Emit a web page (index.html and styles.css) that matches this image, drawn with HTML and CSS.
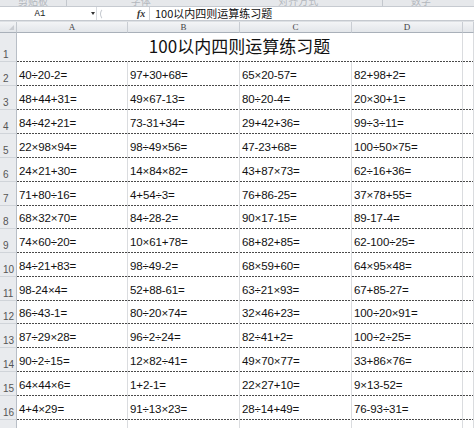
FILE: index.html
```html
<!DOCTYPE html>
<html lang="zh-CN">
<head>
<meta charset="utf-8">
<title>100以内四则运算练习题</title>
<link rel="stylesheet" href="styles.css">
</head>
<body>
<div class="app">
  <div class="ribbon">
    <div class="rgroup g1"><span class="rlabel">剪贴板</span></div>
    <div class="rgroup g2"><span class="rlabel">字体</span><span class="rlabel">对齐方式</span></div>
    <div class="rgroup g3"><span class="rlabel">数字</span></div>
  </div>
  <div class="fbar">
    <div class="namebox"><span class="nb-text">A1</span><span class="nb-arrow"></span></div>
    <div class="fxzone"><span class="arc"></span><span class="fx">fx</span></div>
    <div class="finput">100以内四则运算练习题</div>
  </div>
  <div class="gap"></div>
  <div class="sheet">
    <div class="corner"><span class="tri"></span></div><div class="ch">A</div><div class="ch">B</div><div class="ch">C</div><div class="ch">D</div><div class="ch"></div>

    <div class="rh">1</div><div class="title">100以内四则运算练习题</div><div class="c"></div>

    <div class="rh">2</div><div class="c">40÷20-2=</div><div class="c">97+30+68=</div><div class="c">65×20-57=</div><div class="c">82+98+2=</div><div class="c"></div>
    <div class="rh">3</div><div class="c">48+44+31=</div><div class="c">49×67-13=</div><div class="c">80÷20-4=</div><div class="c">20×30+1=</div><div class="c"></div>
    <div class="rh">4</div><div class="c">84÷42+21=</div><div class="c">73-31+34=</div><div class="c">29+42+36=</div><div class="c">99÷3÷11=</div><div class="c"></div>
    <div class="rh">5</div><div class="c">22×98×94=</div><div class="c">98÷49×56=</div><div class="c">47-23+68=</div><div class="c">100÷50×75=</div><div class="c"></div>
    <div class="rh">6</div><div class="c">24×21+30=</div><div class="c">14×84×82=</div><div class="c">43+87×73=</div><div class="c">62÷16+36=</div><div class="c"></div>
    <div class="rh">7</div><div class="c">71+80÷16=</div><div class="c">4+54÷3=</div><div class="c">76+86-25=</div><div class="c">37×78+55=</div><div class="c"></div>
    <div class="rh">8</div><div class="c">68×32×70=</div><div class="c">84÷28-2=</div><div class="c">90×17-15=</div><div class="c">89-17-4=</div><div class="c"></div>
    <div class="rh">9</div><div class="c">74×60÷20=</div><div class="c">10×61+78=</div><div class="c">68+82+85=</div><div class="c">62-100÷25=</div><div class="c"></div>
    <div class="rh">10</div><div class="c">84÷21+83=</div><div class="c">98÷49-2=</div><div class="c">68×59+60=</div><div class="c">64×95×48=</div><div class="c"></div>
    <div class="rh">11</div><div class="c">98-24×4=</div><div class="c">52+88-61=</div><div class="c">63÷21×93=</div><div class="c">67+85-27=</div><div class="c"></div>
    <div class="rh">12</div><div class="c">86÷43-1=</div><div class="c">80÷20×74=</div><div class="c">32×46+23=</div><div class="c">100÷20×91=</div><div class="c"></div>
    <div class="rh">13</div><div class="c">87÷29×28=</div><div class="c">96÷2÷24=</div><div class="c">82÷41+2=</div><div class="c">100÷2÷25=</div><div class="c"></div>
    <div class="rh">14</div><div class="c">90÷2÷15=</div><div class="c">12×82÷41=</div><div class="c">49×70×77=</div><div class="c">33+86×76=</div><div class="c"></div>
    <div class="rh">15</div><div class="c">64×44×6=</div><div class="c">1+2-1=</div><div class="c">22×27+10=</div><div class="c">9×13-52=</div><div class="c"></div>
    <div class="rh">16</div><div class="c">4+4×29=</div><div class="c">91÷13×23=</div><div class="c">28÷14+49=</div><div class="c">76-93÷31=</div><div class="c"></div>
    <div class="rh last"></div><div class="e"></div><div class="e"></div><div class="e"></div><div class="e"></div><div class="e"></div>
  </div>
</div>
</body>
</html>
```

FILE: styles.css
```css
* { box-sizing: border-box; }
html, body { margin: 0; padding: 0; }
body {
  width: 474px;
  height: 428px;
  overflow: hidden;
  background: #ffffff;
  font-family: "Liberation Sans", Arial, sans-serif;
  color: #111;
}
.app {
  width: 474px;
  height: 428px;
  overflow: hidden;
  display: flex;
  flex-direction: column;
}

/* ribbon strip (cut off) */
.ribbon {
  height: 7px;
  flex: none;
  display: flex;
  align-items: flex-end;
  overflow: hidden;
  background: #e6e8eb;
  border-bottom: 1px solid #c6cad0;
}
.rgroup {
  height: 7px;
  display: flex;
  align-items: flex-end;
  justify-content: space-around;
  border-right: 1px solid #c3c7cd;
  overflow: hidden;
}
.g1 { width: 67px; }
.g2 { width: 316px; }
.g3 { flex: 1; border-right: none; justify-content: flex-start; padding-left: 28px; }
.rlabel {
  font: 10px/10px "Noto Sans CJK SC", sans-serif;
  color: #b3b7bd;
  height: 10px;
  flex: none;
}

/* formula bar */
.fbar {
  height: 14px;
  flex: none;
  display: flex;
  background: #ffffff;
  border-bottom: 1px solid #c5c9cf;
}
.namebox {
  width: 97px;
  display: flex;
  align-items: center;
  border-right: 1px solid #d8dbe0;
}
.nb-text {
  width: 80px;
  text-align: center;
  font: 9px/12px "Liberation Mono", monospace;
  color: #222;
}
.nb-arrow {
  margin-left: 11px;
  width: 0;
  height: 0;
  border-left: 2.5px solid transparent;
  border-right: 2.5px solid transparent;
  border-top: 3px solid #333;
}
.fxzone {
  width: 53px;
  display: flex;
  align-items: center;
  background: #ffffff;
  border-right: 1px solid #d0d3d8;
}
.arc {
  margin-left: 3px;
  width: 10px;
  height: 12px;
  border: 1px solid #c4c8ce;
  border-top-color: transparent;
  border-right-color: transparent;
  border-bottom-color: transparent;
  border-radius: 50%;
}
.fx {
  margin-left: 27px;
  font: italic bold 10px/12px "Liberation Serif", serif;
  color: #333;
}
.finput {
  flex: 1;
  padding-left: 5px;
  font: 11px/13px "Noto Sans CJK SC", sans-serif;
  color: #111;
  white-space: nowrap;
}
.gap {
  height: 1px;
  flex: none;
  background: #dde0e4;
}

/* sheet grid */
.sheet {
  flex: 1;
  display: grid;
  grid-template-columns: 17px 111px 112px 112px 111px 11px;
  grid-template-rows: 11px 29px 24px 24px 24px 24px 24px 24px 23px 24px 24px 24px 23px 24px 24px 24px 24px 1fr;
}
.corner {
  position: relative;
  background: linear-gradient(#f2f3f5, #e2e5e9);
  border-right: 1px solid #c3c8ce;
  border-bottom: 1px solid #a9b0b9;
}
.tri {
  position: absolute;
  right: 2px;
  bottom: 2px;
  width: 0;
  height: 0;
  border-left: 5px solid transparent;
  border-bottom: 5px solid #c9ccd1;
}
.ch {
  background: linear-gradient(#f3f4f6, #e3e6ea);
  border-right: 1px solid #c9cdd3;
  border-bottom: 1px solid #a9b0b9;
  text-align: center;
  font: 9px/10px "Liberation Serif", serif;
  color: #444;
}
.rh {
  background: #e9ebee;
  border-right: 1px solid #b8bec6;
  border-bottom: 1px solid #d0d4d9;
  display: flex;
  align-items: flex-end;
  padding: 0 0 1px 3px;
  font: 10px/10px "Liberation Sans", Arial, sans-serif;
  color: #555;
}
.rh.last { border-bottom: none; }
.c, .title {
  border-right: 1px solid #dadcdf;
  background-image: repeating-linear-gradient(90deg, #4a4a4a 0 2px, transparent 2px 3px);
  background-size: 100% 1px;
  background-position: left bottom;
  background-repeat: no-repeat;
  display: flex;
  align-items: flex-end;
  padding: 0 0 4px 2px;
  font-size: 11.5px;
  line-height: 13px;
  letter-spacing: -0.1px;
  color: #111;
  white-space: nowrap;
  overflow: hidden;
}
.title {
  grid-column: span 4;
  justify-content: center;
  align-items: center;
  padding: 0 0 3px 0;
  font: 17px/20px "Noto Sans CJK SC", sans-serif;
  letter-spacing: 0;
  color: #111;
}
.e {
  border-right: 1px solid #dadcdf;
}
```
